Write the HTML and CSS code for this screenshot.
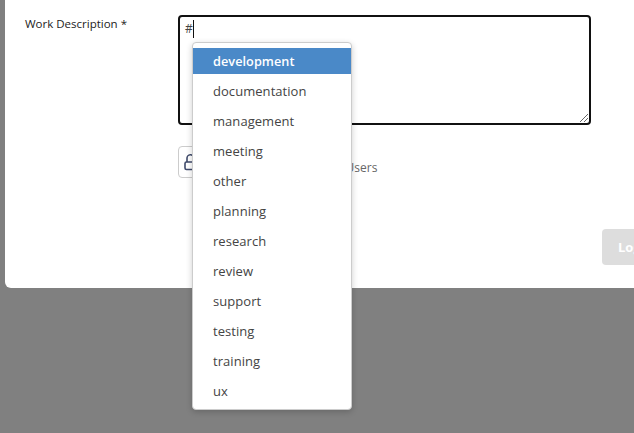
FILE: index.html
```html
<!DOCTYPE html>
<html lang="en">
<head>
<meta charset="utf-8">
<title>Work Description</title>
<link rel="stylesheet" href="styles.css">
</head>
<body>
<main class="card">
  <div class="field">
    <label class="label">Work Description *</label>
    <div class="control">
      <div class="textarea">
        <span class="typed">#</span><span class="caret"></span>
        <svg class="grip" width="10" height="10" viewBox="0 0 10 10"><path d="M9 1 1 9M9 5 5 9" stroke="#666" fill="none"/></svg>
      </div>
      <div class="visibility">
        <span class="lock">
          <svg width="14" height="18" viewBox="0 0 14 18"><path d="M3 9V5.5a3.5 3.5 0 0 1 7-.5" fill="none" stroke="#3f4a6b" stroke-width="1.6"/><rect x="1" y="9" width="12" height="7.5" rx="1.5" fill="none" stroke="#3f4a6b" stroke-width="1.6"/></svg>
        </span>
        <span class="vis-text">Visible to All Users</span>
      </div>
    </div>
  </div>
  <div class="actions"><button class="submit">Log Work</button></div>
</main>
<ul class="menu">
  <li class="item active">development</li>
  <li class="item">documentation</li>
  <li class="item">management</li>
  <li class="item">meeting</li>
  <li class="item">other</li>
  <li class="item">planning</li>
  <li class="item">research</li>
  <li class="item">review</li>
  <li class="item">support</li>
  <li class="item">testing</li>
  <li class="item">training</li>
  <li class="item">ux</li>
</ul>
</body>
</html>
```
FILE: styles.css
```css
html, body { margin: 0; height: 100%; overflow: hidden; }
body {
  background: #808080;
  font-family: "Open Sans", "Noto Sans", sans-serif;
  color: #333;
  position: relative;
}
.card {
  margin-left: 5px;
  width: 660px;
  height: 288px;
  box-sizing: border-box;
  background: #fff;
  border-radius: 0 0 6px 6px;
  padding: 15px 0 0 20px;
}
.field { display: flex; }
.label {
  width: 153px;
  font-size: 11.5px;
  line-height: 17px;
  color: #222;
}
.control { width: 413px; }
.textarea {
  position: relative;
  box-sizing: border-box;
  height: 110px;
  border: 2px solid #111;
  border-radius: 4px;
  padding: 3px 4px;
  font-size: 13px;
  line-height: 18px;
  color: #444;
  display: flex;
  align-items: flex-start;
}
.typed { font-size: 12px; padding-left: 1px; }
.caret { width: 1px; height: 18px; background: #111; }
.grip { position: absolute; right: 0; bottom: 0; }
.visibility { display: flex; align-items: center; margin-top: 21px; height: 32px; }
.lock {
  box-sizing: border-box;
  width: 33px;
  height: 32px;
  border: 1px solid #ccc;
  border-radius: 4px;
  display: flex;
  align-items: center;
  padding-left: 5px;
}
.vis-text { margin-left: 64px; font-size: 12px; color: #666; padding-top: 11px; white-space: nowrap; }
.actions { display: flex; margin-top: 51px; margin-left: 577px; }
.submit {
  flex: none;
  width: 100px;
  height: 36px;
  border: 0;
  border-radius: 4px;
  background: #ddd;
  color: #fff;
  font: 700 13px "Open Sans", sans-serif;
  padding: 0 0 0 16px;
  text-align: left;
  white-space: nowrap;
}
.menu {
  position: absolute;
  left: 192px;
  top: 42px;
  width: 160px;
  height: 368px;
  box-sizing: border-box;
  margin: 0;
  padding: 5px 0;
  list-style: none;
  background: #fff;
  border: 1px solid #ccc;
  border-radius: 4px;
  box-shadow: 0 2px 6px rgba(0,0,0,.2);
  display: flex;
  flex-direction: column;
  gap: 4px;
}
.item {
  height: 26px;
  line-height: 26px;
  padding-left: 20px;
  font-size: 13px;
  letter-spacing: .05px;
  color: #444;
}
.active { background: #4a89c8; color: #fff; font-weight: 600; font-size: 12.7px; }
```
